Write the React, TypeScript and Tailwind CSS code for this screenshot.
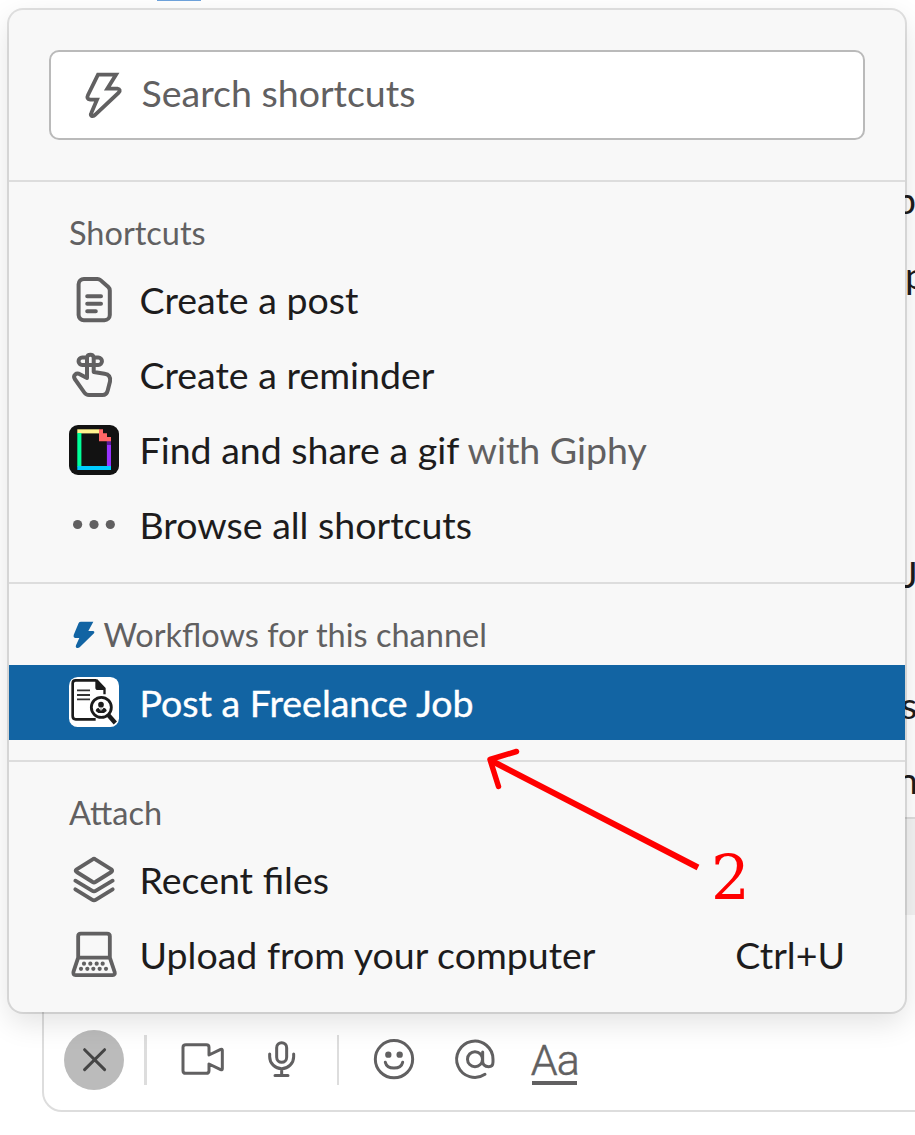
import type { ReactNode } from "react";

function Row({ icon, children, active = false, hint }: { icon: ReactNode; children: ReactNode; active?: boolean; hint?: string }) {
  return (
    <div className={active ? "flex h-[75px] items-center bg-[#1264a3] px-[60px] pt-px text-white [-webkit-text-stroke:0.4px_white]" : "flex h-[75px] items-center px-[60px]"}>
      <div className={active ? "mr-[20.500px] mb-[3px] size-[50px] shrink-0" : "mr-[20.500px] mb-[2px] size-[50px] shrink-0"}>{icon}</div>
      <span className="whitespace-pre">{children}</span>
      {hint && <span className="ml-auto">{hint}</span>}
    </div>
  );
}

const line = "fill-none stroke-[#616061] [stroke-linecap:round] [stroke-linejoin:round]";

function PostIcon() {
  return (
    <svg viewBox="69 275 50 50" className={line} strokeWidth="4">
      <path d="M84 278.9H97.5q1.7 0 3 1.2L108.300 287q1.500 1.400 1.500 3.500V315a5.300 5.300 0 0 1-5.300 5.200H84a5.300 5.300 0 0 1-5.400-5.200V284.200A5.300 5.300 0 0 1 84 278.900ZM87.200 296.300H101M87.200 303.800H101M87.200 311.300H95.800" />
    </svg>
  );
}

function ReminderIcon() {
  return (
    <svg viewBox="69 350 50 50" className={line} strokeWidth="4">
      <path d="M87 378V357.500a3.400 3.400 0 0 1 6.700 0V372L104.500 373.800Q111.200 374.800 110 381.500L107.700 390.500Q106.600 395 102.500 395H89Q86 395 84.300 392.500L74.800 379Q73.200 376.200 75.200 374.500 77.200 372.700 80.300 374.400L87 378M87 357.600H82.200a3.600 3.600 0 0 0 0 7.300H98.300a3.600 3.600 0 0 0 0-7.300H93.700" />
    </svg>
  );
}

function GiphyIcon() {
  return (
    <svg viewBox="69 425 50 50">
      <rect x="69" y="425" width="50" height="50" rx="9" fill="#121212" />
      <path d="M77.300 429.300H99.300V433.400H77.300Z" fill="#fff38f" />
      <path d="M77.300 433H81.400V466.500H77.300Z" fill="#00ff99" />
      <path d="M106.900 441H111V466.500H106.900Z" fill="#9933ff" />
      <path d="M106.900 441H111V445H106.900Z" fill="#5a1a99" />
      <path d="M77.300 466H111V470H77.300Z" fill="#00ccff" />
      <path d="M99 429.300H103V433.200H107V437H111V441.200H99Z" fill="#ff6666" />
    </svg>
  );
}

function DotsIcon() {
  return (
    <svg viewBox="69 500 50 50" fill="#616061">
      <circle cx="77.600" cy="524.500" r="4.600" />
      <circle cx="94" cy="524.500" r="4.600" />
      <circle cx="110.300" cy="524.500" r="4.600" />
    </svg>
  );
}

function JobIcon() {
  return (
    <svg viewBox="57 231 150 150" fill="none" stroke="#1b1b1b">
      <rect x="57" y="231" width="150" height="150" rx="26" fill="#fff" stroke="none" />
      <path d="M138 241H77Q68 241 68 250V348Q68 358 77 358H137" strokeWidth="8" />
      <path d="M136 238H142L167 264V283H160V270H144Q136 270 136 263Z" fill="#1b1b1b" stroke="none" />
      <path d="M81 271H120M81 285H120M81 298H120" strokeWidth="5.500" stroke="#333" />
      <circle cx="154" cy="322" r="30" strokeWidth="8.500" />
      <path d="M175 345 196 369" strokeWidth="13" />
      <circle cx="153" cy="314" r="8.500" fill="#1b1b1b" stroke="none" />
      <path d="M137 333Q137 325 145 323L153 333 161 323Q170 325 170 333L162 339H145Z" fill="#1b1b1b" stroke="none" />
      <path d="M153 325V334" stroke="#1b1b1b" strokeWidth="2" />
    </svg>
  );
}

function LayersIcon() {
  return (
    <svg viewBox="57 45 150 150" className={line} strokeWidth="11.500">
      <path d="M128 58Q132 55 136 58L184 88Q189 92 184 96L136 126Q132 129 128 126L80 96Q74 92 80 88ZM76 122 126 152Q132 156 138 152L188 122M76 148 126 179Q132 183 138 179L188 148" />
    </svg>
  );
}

function LaptopIcon() {
  const keys = [
    [102, 371], [121, 371], [140, 371], [158, 371],
    [93, 386.5], [112, 386.5], [130, 386.5], [149, 386.5], [168, 386.5],
  ];
  return (
    <svg viewBox="57 270 150 150" className={line} strokeWidth="11.500">
      <path d="M84.500 353V289Q84.500 281 92.500 281H171Q179.500 281 179.500 289V353ZM84.500 353 70.500 395Q68 405 77 405.500H188Q196 405 194 396L179.500 353" />
      {keys.map(([x, y]) => (
        <circle key={x} cx={x} cy={y} r="6.300" fill="#616061" stroke="none" />
      ))}
    </svg>
  );
}

function Composer() {
  return (
    <div className="absolute top-[817px] left-[42px] flex h-[295px] w-[900px] flex-col overflow-hidden rounded-[20px] border-2 border-[#dddddd] bg-white">
      <div className="h-[96px] bg-[#f3f3f3]" />
      <div className="mt-auto mb-[20px] flex h-[60px] items-center pl-[20px]">
        <div className="flex size-[60px] items-center justify-center rounded-full bg-[#bbbbbb]">
          <svg viewBox="0 0 60 60" className="size-[60px] fill-none stroke-[#454545] [stroke-linecap:round]" strokeWidth="3">
            <path d="M20.600 19.700 40.600 39.600M40.600 19.700 20.600 39.600" />
          </svg>
        </div>
        <div className="ml-[20px] h-[50px] w-[3px] bg-[#dddddd]" />
        <svg viewBox="450 120 140 180" className={line + " ml-[33px] h-[60px] w-[46.67px]"} strokeWidth="9">
          <path d="M468 164H529Q537 164 537 172V195L572 178Q577 176 577 181V236Q577 241 572 239L537 222V242Q537 250 529 250H467Q459 250 459 242V172Q459 164 468 164Z" />
        </svg>
        <svg viewBox="705 120 100 180" className={line + " ml-[38.330px] h-[60px] w-[33.330px]"} strokeWidth="9">
          <path d="M740 173a15 15 0 0 1 30 0V202a15 15 0 0 1-30 0ZM719 192V200a36 36 0 0 0 72 0V192M755 236V256M735 256.500H774" />
        </svg>
        <div className="ml-[38.670px] h-[50px] w-[2px] bg-[#dddddd]" />
        <svg viewBox="120 90 140 180" className={line + " ml-[31px] h-[60px] w-[46.670px]"} strokeWidth="9">
          <circle cx="192" cy="177.500" r="56" />
          <path d="M166 187Q170 204 192 204T218 187" strokeWidth="9" />
          <circle cx="175" cy="164" r="9.500" fill="#616061" stroke="none" />
          <circle cx="209" cy="164" r="9.500" fill="#616061" stroke="none" />
        </svg>
        <svg viewBox="365 90 140 180" className={line + " ml-[35px] h-[60px] w-[46.670px]"} strokeWidth="9">
          <path d="M464 223A54.500 54.500 0 1 1 488 178V186Q488 200 475 200 457 200 457 184V156" />
          <circle cx="434" cy="177.500" r="22.500" />
        </svg>
        <div className="ml-[34px] flex h-[50px] w-[45px] flex-col items-center justify-end border-b-4 border-[#616061] font-[Roboto] text-[43px]/[42px] font-light text-[#616061]">
          <span className="tracking-[-1px] [-webkit-text-stroke:0.5px_#616061]">Aa</span>
        </div>
      </div>
    </div>
  );
}

export default function App() {
  return (
    <main className="relative h-[1135px] w-[915px] overflow-hidden bg-white p-[9px] pt-[10px] font-[Lato,sans-serif] text-[37.500px] text-[#1d1c1d]">
      <div className="absolute top-0 left-[157px] h-px w-[44px] bg-[#6ea3dc]" />
      <span className="absolute top-[177px] left-[895px] leading-[45px]">p</span>
      <span className="absolute top-[252px] left-[905px] leading-[45px]">p</span>
      <span className="absolute top-[551px] left-[902px] leading-[45px]">J</span>
      <span className="absolute top-[682px] left-[901px] leading-[45px]">s</span>
      <span className="absolute top-[757px] left-[897px] leading-[45px]">n</span>
      <Composer />
      <section className="relative h-[1002px] w-[896px] rounded-[14px] bg-[#f8f8f8] shadow-[0_0_0_2px_rgba(29,28,29,0.13),0_10px_30px_rgba(0,0,0,0.12)]">
        <div className="h-[172px] border-b-2 border-[#dddddd] px-[40px] pt-[40px]">
          <div className="flex h-[90px] items-center rounded-[10px] border-2 border-[#bababa] bg-white pl-[31px] text-[#616061]">
            <svg viewBox="246 210 138 150" className="h-[50px] w-[46px] fill-none stroke-[#616061] [stroke-linejoin:miter]" strokeWidth="11.500">
              <path d="M294 224H348L322 266H352Q364 268 356 278L286 344Q280 350 274 347 271 344 274 339L291 299H271Q258 297 264 285Z" />
            </svg>
            <span className="mb-[4px] ml-[13.500px] leading-[56px]">Search shortcuts</span>
          </div>
        </div>
        <div className="h-[402px] border-b-2 border-[#dddddd] pt-[31px]">
          <h2 className="h-[50px] pl-[60px] text-[32.500px]/[40px] text-[#616061]">Shortcuts</h2>
          <Row icon={<PostIcon />}>Create a post</Row>
          <Row icon={<ReminderIcon />}>Create a reminder</Row>
          <Row icon={<GiphyIcon />}>Find and share a gif <span className="text-[#616061]">with Giphy</span></Row>
          <Row icon={<DotsIcon />}>Browse all shortcuts</Row>
        </div>
        <div className="h-[178px] border-b-2 border-[#dddddd] pt-[31px]">
          <h2 className="flex h-[50px] items-start pl-[60px] text-[32.500px]/[40px] text-[#616061]">
            <svg viewBox="57 45 105 132" className="h-[44px] w-[35px]" fill="#1264a3">
              <path d="M93 65H130L115 93H129Q135 94 132 100L89 142Q84 146 79 143 76 141 78 136L88 114H75Q69 112 71 105L86 69Q88 65 93 65Z" />
            </svg>
            <span className="-ml-[0.500px]">Workflows for this channel</span>
          </h2>
          <Row active icon={<JobIcon />}>Post a Freelance Job</Row>
        </div>
        <div className="pt-[31px]">
          <h2 className="h-[50px] pl-[60px] text-[32.500px]/[40px] text-[#616061]">Attach</h2>
          <Row icon={<LayersIcon />}>Recent files</Row>
          <Row icon={<LaptopIcon />} hint="Ctrl+U">Upload from your computer</Row>
        </div>
      </section>
      <svg viewBox="480 740 230 140" className="absolute top-[740px] left-[480px] h-[140px] w-[230px] fill-none stroke-[#ff0000]" strokeWidth="6">
        <path d="M698 867.500 490 760" />
        <path d="M516.500 751.500 490 759.500 498.500 786.500" strokeWidth="5.500" strokeLinecap="round" strokeLinejoin="round" />
      </svg>
      <span className="absolute top-[842px] left-[711px] font-['DejaVu_Serif'] text-[61px]/[72px] text-[#ff0000]">2</span>
    </main>
  );
}
